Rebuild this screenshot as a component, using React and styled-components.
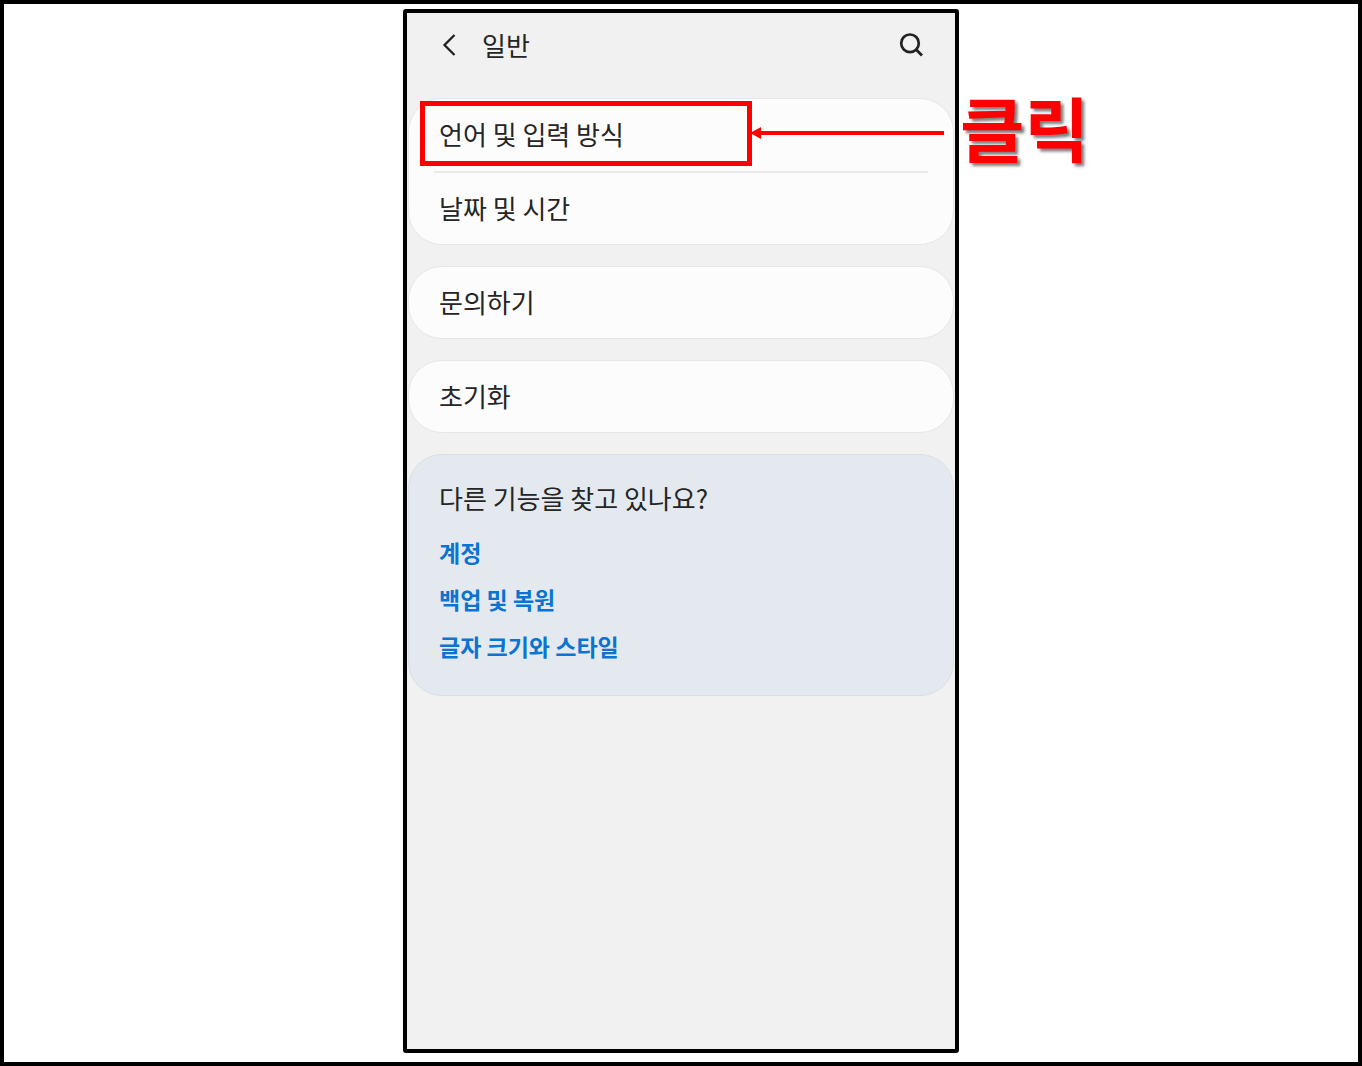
import { Fragment } from "react";
import styled, { createGlobalStyle } from "styled-components";

const GlobalStyle = createGlobalStyle`
	* {
		box-sizing: border-box;
	}
	body {
		margin: 0;
		background-color: #fff;
		color: #252525;
		font-family: "Noto Sans CJK KR", "Noto Sans", sans-serif;
	}
`;

const Page = styled.div`
	display: flex;
	justify-content: center;
	min-height: 100vh;
	padding: 5px 5px 9px;
	border: 4px solid #000;
`;

const Phone = styled.main`
	width: 100%;
	max-width: 556px;
	border: 4px solid #000;
	border-radius: 3px;
	background-color: #f1f1f1;
`;

const Header = styled.header`
	display: flex;
	align-items: center;
	gap: 14px;
	height: 64px;
	padding: 0 25px 0 27px;
`;

const Title = styled.h1`
	flex: 1;
	margin: 0;
	font-size: 26px;
	font-weight: 400;
	line-height: 36px;
`;

const IconButton = styled.button`
	display: flex;
	padding: 0;
	border: none;
	background: none;
	color: #222;
	cursor: pointer;
`;

const Sections = styled.div`
	display: flex;
	flex-direction: column;
	gap: 21px;
	padding: 21px 1px;
`;

const Card = styled.section`
	border: 1px solid ${(props) => (props.$tinted ? "#d9dfe5" : "#e6e6e6")};
	border-radius: 34px;
	background-color: ${(props) => (props.$tinted ? "#e3e9ef" : "#fcfcfc")};
	padding: ${(props) => (props.$tinted ? "25px 30px" : "0")};
`;

const Row = styled.div`
	position: relative;
`;

const RowButton = styled.button`
	display: block;
	width: 100%;
	padding: 17px 30px 18px;
	border: none;
	background: none;
	color: inherit;
	font-family: inherit;
	font-size: 26px;
	line-height: 36px;
	text-align: left;
	cursor: pointer;
`;

const Divider = styled.hr`
	height: 2px;
	margin: 1px 25px 0;
	border: none;
	background-color: #e9e9e9;
`;

const Question = styled.h2`
	margin: 0 0 18px;
	font-size: 26px;
	font-weight: 400;
	line-height: 36px;
`;

const Links = styled.nav`
	display: flex;
	flex-direction: column;
	align-items: flex-start;
	gap: 11px;
	padding-bottom: 6px;
`;

const StyledLink = styled.a`
	color: #0b74d1;
	font-size: 23px;
	font-weight: 700;
	line-height: 36px;
	text-decoration: none;
`;

const Callout = styled.div`
	position: absolute;
	top: 2px;
	left: 11px;
	display: flex;
	align-items: center;
	color: #ff0000;
	pointer-events: none;
`;

const Outline = styled.div`
	width: 332px;
	height: 65px;
	border: 5px solid currentColor;
`;

const Arrow = styled.svg`
	flex: none;
	margin-left: -2px;
`;

const CalloutText = styled.strong`
	margin: 0 0 14px 16px;
	font-size: 70px;
	font-weight: 700;
	line-height: 51px;
	white-space: nowrap;
	text-shadow: 3px 3px 3px rgba(0, 0, 0, 0.5);
`;

const groups = [["언어 및 입력 방식", "날짜 및 시간"], ["문의하기"], ["초기화"]];
const links = ["계정", "백업 및 복원", "글자 크기와 스타일"];

const App = () => {
	return (
		<Page>
			<GlobalStyle />
			<Phone>
				<Header>
					<IconButton aria-label="뒤로">
						<svg width="34" height="34" viewBox="0 0 34 34" fill="none">
							<path
								d="M20.5 7 10.5 17l10 10"
								stroke="currentColor"
								strokeWidth="2.3"
							/>
						</svg>
					</IconButton>
					<Title>일반</Title>
					<IconButton aria-label="검색">
						<svg width="38" height="38" viewBox="0 0 38 38" fill="none">
							<circle
								cx="18"
								cy="17.3"
								r="8.8"
								stroke="currentColor"
								strokeWidth="2.7"
							/>
							<path
								d="m24.3 23.8 5.7 5.7"
								stroke="currentColor"
								strokeWidth="2.9"
							/>
						</svg>
					</IconButton>
				</Header>
				<Sections>
					{groups.map((group, groupIndex) => (
						<Card key={group[0]}>
							{group.map((label, index) => (
								<Fragment key={label}>
									{index > 0 && <Divider />}
									<Row>
										<RowButton>{label}</RowButton>
										{groupIndex === 0 && index === 0 && (
											<Callout>
												<Outline />
												<Arrow width="194" height="15" viewBox="0 0 194 15">
													<path d="M0 7 11 1v4h183v4H11v4z" fill="currentColor" />
												</Arrow>
												<CalloutText>클릭</CalloutText>
											</Callout>
										)}
									</Row>
								</Fragment>
							))}
						</Card>
					))}
					<Card $tinted>
						<Question>다른 기능을 찾고 있나요?</Question>
						<Links>
							{links.map((link) => (
								<StyledLink key={link} href="#">
									{link}
								</StyledLink>
							))}
						</Links>
					</Card>
				</Sections>
			</Phone>
		</Page>
	);
};

export default App;
